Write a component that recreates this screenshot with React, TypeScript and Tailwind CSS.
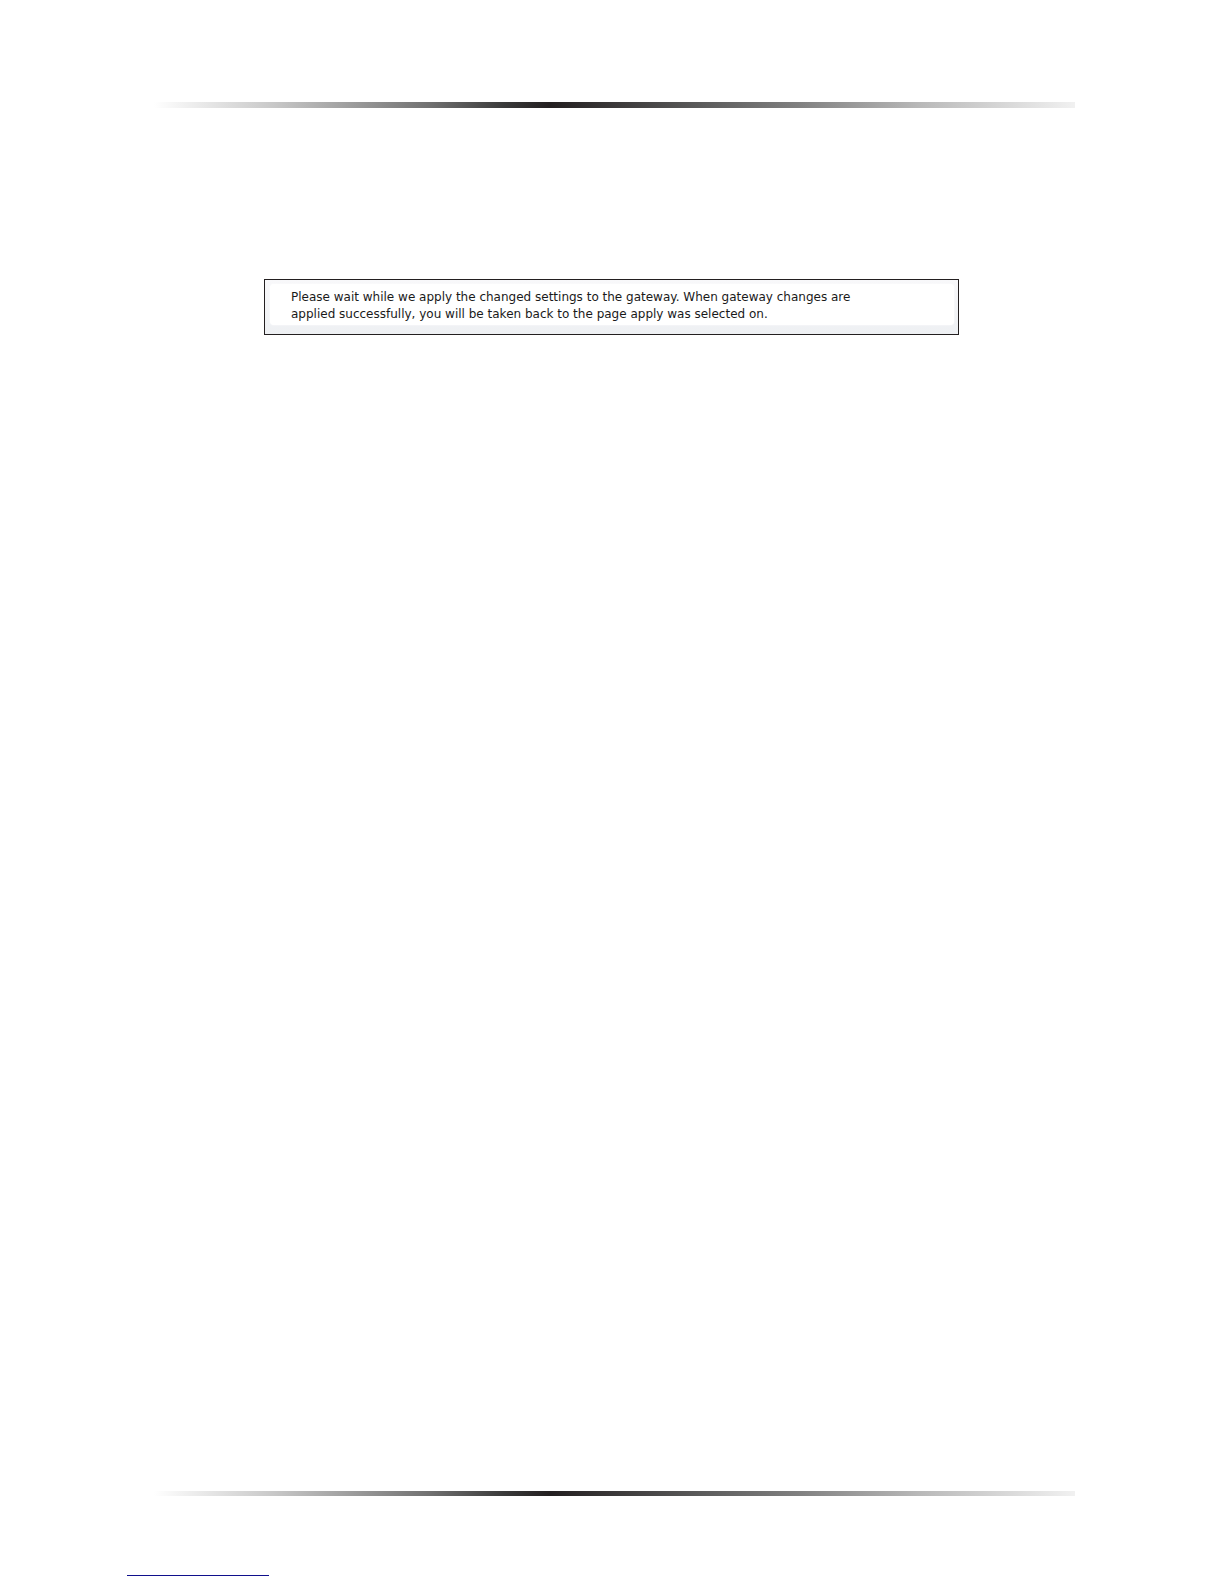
import React from 'react';

const Rule: React.FC<{ className: string }> = ({ className }) => (
  <div
    className={`w-full bg-[linear-gradient(to_right,#ffffff_0%,#c8c8c8_13%,#a4a4a4_20%,#707070_30%,#3a3a3a_38%,#231f20_43%,#5a5a5a_59%,#808080_70%,#b8b8b8_83%,#f1f1f1_100%)] ${className}`}
  />
);

const Notice: React.FC<{ children: React.ReactNode }> = ({ children }) => (
  <section
    role="status"
    className="border border-[#231f20] bg-linear-to-b from-[#f8f8fa] to-[#eef0f3] pt-1 pr-1 pb-[9px] pl-[5px]"
  >
    <div className="rounded-sm bg-white pt-[5px] pb-[2px] pl-[21px] shadow-[0_0_2px_#ffffff]">
      <p className="font-['DejaVu_Sans',Verdana,sans-serif] text-[12px] leading-[17px] text-[#1a1a1a]">{children}</p>
    </div>
  </section>
);

export default function App() {
  return (
    <div className="flex min-h-screen flex-col bg-white pt-[102px] pb-2">
      <header className="pr-[149px] pl-[154px]">
        <Rule className="h-[6px]" />
      </header>
      <main className="flex-1 pt-[171px] pr-[265px] pl-[264px]">
        <Notice>
          Please wait while we apply the changed settings to the gateway. When gateway changes are
          <br />
          applied successfully, you will be taken back to the page apply was selected on.
        </Notice>
      </main>
      <footer>
        <div className="pr-[149px] pl-[154px]">
          <Rule className="h-[5px]" />
        </div>
        <div className="mt-[79px] ml-[127px] h-px w-[142px] bg-[#10108c]" />
      </footer>
    </div>
  );
}
